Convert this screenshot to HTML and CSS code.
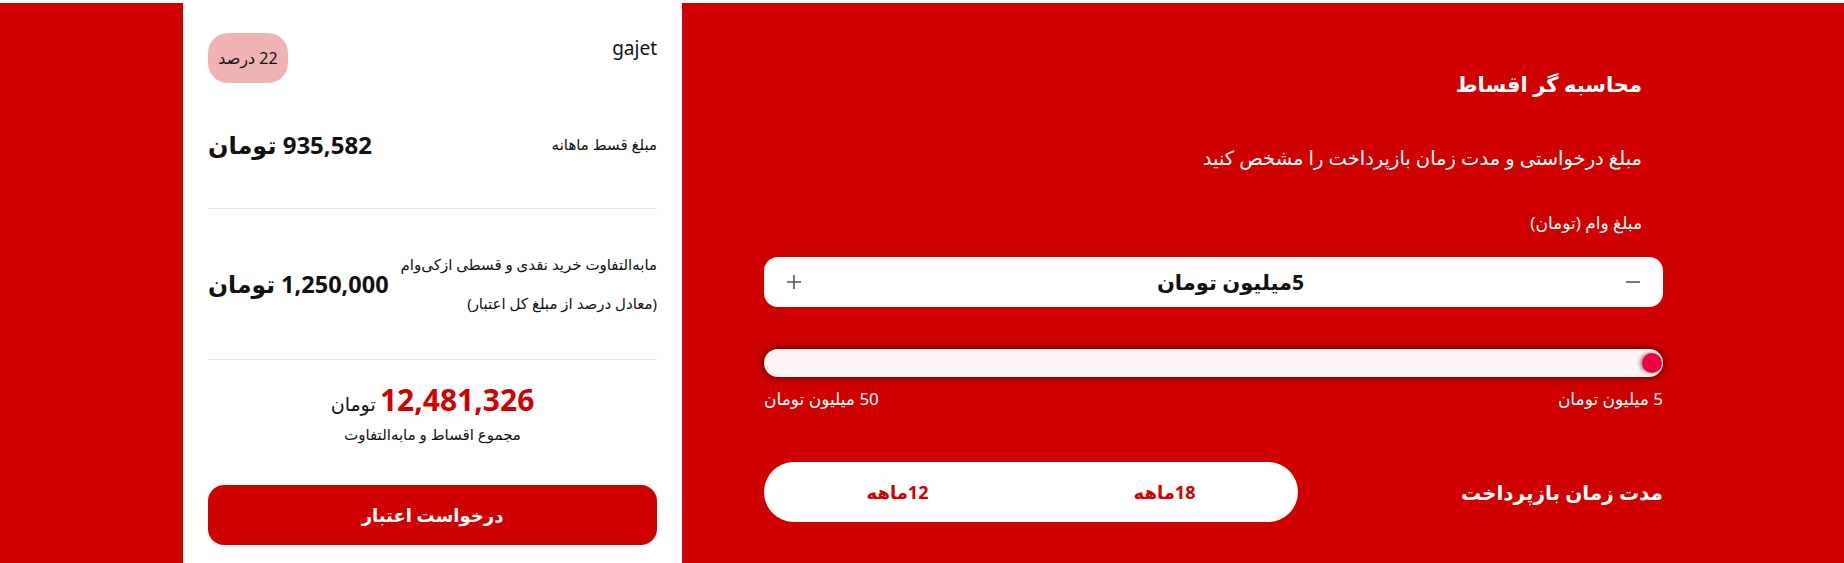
FILE: index.html
```html
<!DOCTYPE html>
<html lang="fa">
<head>
<meta charset="utf-8">
<title>محاسبه گر اقساط</title>
<link rel="stylesheet" href="styles.css">
</head>
<body>
<section class="calc">
  <div class="panel" dir="rtl">
    <h2 class="panel-title">محاسبه گر اقساط</h2>
    <p class="panel-sub">مبلغ درخواستی و مدت زمان بازپرداخت را مشخص کنید</p>
    <p class="panel-label">مبلغ وام (تومان)</p>
    <div class="amount-box">
      <span class="amount-btn">
        <svg width="16" height="16" viewBox="0 0 16 16"><path d="M1 8H15" stroke="#555" stroke-width="1.6"/></svg>
      </span>
      <span class="amount-value">5میلیون تومان</span>
      <span class="amount-btn">
        <svg width="16" height="16" viewBox="0 0 16 16"><path d="M1 8H15M8 1V15" stroke="#555" stroke-width="1.6"/></svg>
      </span>
    </div>
    <div class="slider">
      <span class="slider-thumb"></span>
    </div>
    <div class="range-labels">
      <span>5 میلیون تومان</span>
      <span>50 میلیون تومان</span>
    </div>
    <div class="term-row">
      <span class="term-title">مدت زمان بازپرداخت</span>
      <div class="term-pill">
        <span class="term-opt">18ماهه</span>
        <span class="term-opt">12ماهه</span>
      </div>
    </div>
  </div>
  <div class="card" dir="rtl">
    <div class="card-head">
      <span class="brand" dir="ltr">gajet</span>
      <span class="badge">22 درصد</span>
    </div>
    <div class="row row-first">
      <span class="row-label">مبلغ قسط ماهانه</span>
      <span class="row-value">935,582 تومان</span>
    </div>
    <div class="row row-second">
      <span class="row-label two-line">مابه‌التفاوت خرید نقدی و قسطی ازکی‌وام<br>(معادل درصد از مبلغ کل اعتبار)</span>
      <span class="row-value">1,250,000 تومان</span>
    </div>
    <div class="total">
      <div class="total-line"><span class="total-num">12,481,326</span> <span class="total-unit">تومان</span></div>
      <div class="total-caption">مجموع اقساط و مابه‌التفاوت</div>
    </div>
    <button class="cta">درخواست اعتبار</button>
  </div>
  <div class="side"></div>
</section>
</body>
</html>
```
FILE: styles.css
```css
* { box-sizing: border-box; }
html, body { margin: 0; padding: 0; background: #fff; }
body {
  font-family: "Noto Sans", "DejaVu Sans", sans-serif;
  color: #111;
  overflow: hidden;
}
.calc {
  margin-top: 3px;
  height: 560px;
  background: #cf0000;
  display: flex;
  flex-direction: row-reverse;
}
.side { width: 183px; flex: none; }
.card {
  width: 499px;
  flex: none;
  background: #fff;
  margin-top: -3px;
  padding: 33px 25px 0;
}
.card-head {
  display: flex;
  justify-content: space-between;
  align-items: flex-start;
  height: 50px;
}
.brand {
  font-size: 19px;
  line-height: 24px;
  margin-top: 3px;
  color: #111;
}
.badge {
  width: 80px;
  height: 50px;
  border-radius: 20px;
  background: #f0b3b3;
  display: flex;
  align-items: center;
  justify-content: center;
  font-size: 16px;
  color: #111;
}
.row {
  display: flex;
  justify-content: space-between;
  align-items: center;
  border-bottom: 1px solid #e5e7eb;
}
.row-first { height: 126px; padding-bottom: 3px; }
.row-second { height: 151px; }
.row-label { font-size: 15px; color: #111; }
.two-line { line-height: 39px; }
.row-value {
  font-size: 24px;
  font-weight: 700;
  color: #111;
}
.row-second .row-value { font-size: 23.5px; }
.total {
  height: 125px;
  padding-top: 21px;
  text-align: center;
}
.total-line { line-height: 38px; }
.total-num {
  color: #cf0000;
  font-size: 30px;
  font-weight: 700;
}
.total-unit { font-size: 19px; color: #111; }
.total-caption {
  font-size: 15px;
  margin-top: 0;
}
.cta {
  display: block;
  width: 100%;
  height: 60px;
  border: none;
  border-radius: 16px;
  background: #cf0000;
  color: #fff;
  font-family: inherit;
  font-size: 18px;
  font-weight: 700;
}
.panel {
  flex: 1;
  padding: 0 181px 0 82px;
  color: #fff;
}
.panel-title {
  margin: 64px 21px 0 0;
  font-size: 21px;
  line-height: 34px;
  font-weight: 700;
}
.panel-sub {
  margin: 42px 21px 0 0;
  font-size: 19.5px;
  line-height: 30px;
}
.panel-label {
  margin: 37px 21px 0 0;
  font-size: 17px;
  line-height: 26px;
}
.amount-box {
  margin-top: 21px;
  height: 50px;
  background: #fff;
  border-radius: 14px;
  display: flex;
  align-items: center;
  justify-content: space-between;
  padding: 0 22px;
  color: #111;
}
.amount-btn { display: flex; width: 16px; }
.amount-value {
  font-size: 21px;
  font-weight: 700;
  margin-left: 34px;
}
.slider {
  margin-top: 42px;
  height: 28px;
  border-radius: 14px;
  background: #fdf4f5;
  box-shadow: 0 0 8px rgba(60, 0, 0, 0.85);
  position: relative;
}
.slider-thumb {
  position: absolute;
  right: 1px;
  top: 4px;
  width: 20px;
  height: 20px;
  border-radius: 50%;
  background: #f0003c;
  box-shadow: -2px 0 4px rgba(0, 0, 0, 0.45);
}
.range-labels {
  display: flex;
  justify-content: space-between;
  margin-top: 10px;
  font-size: 17px;
  line-height: 24px;
}
.term-row {
  margin-top: 51px;
  display: flex;
  justify-content: space-between;
  align-items: center;
}
.term-title {
  font-size: 20px;
  font-weight: 700;
}
.term-pill {
  width: 534px;
  height: 60px;
  border-radius: 30px;
  background: #fff;
  display: flex;
  align-items: center;
}
.term-opt {
  flex: 1;
  text-align: center;
  color: #cf0000;
  font-size: 18px;
  font-weight: 700;
}
```
